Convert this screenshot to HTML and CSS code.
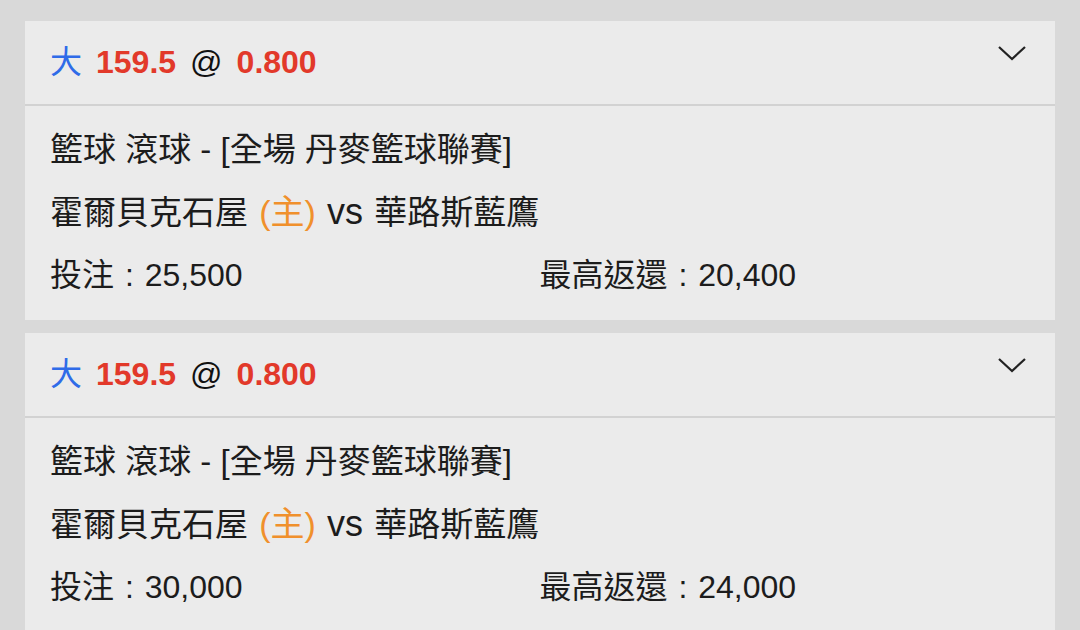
FILE: index.html
```html
<!DOCTYPE html>
<html lang="zh-Hant">
<head>
    <meta charset="UTF-8">
    <meta name="viewport" content="width=device-width, initial-scale=1.0">
    <title>投注記錄</title>
    <link rel="stylesheet" href="styles.css">
</head>
<body>
    <div class="bet-list">
        <div class="bet-card">
            <div class="bet-head">
                <div class="bet-title">
                    <span class="side">大</span>
                    <span class="num">159.5</span>
                    <span class="at">@</span>
                    <span class="num">0.800</span>
                </div>
                <svg class="chevron" width="30" height="16" viewBox="0 0 30 16">
                    <path d="M2 2 L15 14 L28 2" fill="none" stroke="#222" stroke-width="2.2"/>
                </svg>
            </div>
            <div class="bet-body">
                <div class="line">籃球 滾球 - [全場 丹麥籃球聯賽]</div>
                <div class="line match">霍爾貝克石屋 <span class="home">(主)</span> <span class="vs">vs</span> 華路斯藍鷹</div>
                <div class="line amounts">
                    <span>投注 : 25,500</span>
                    <span>最高返還 : 20,400</span>
                </div>
            </div>
        </div>

        <div class="bet-card">
            <div class="bet-head">
                <div class="bet-title">
                    <span class="side">大</span>
                    <span class="num">159.5</span>
                    <span class="at">@</span>
                    <span class="num">0.800</span>
                </div>
                <svg class="chevron" width="30" height="16" viewBox="0 0 30 16">
                    <path d="M2 2 L15 14 L28 2" fill="none" stroke="#222" stroke-width="2.2"/>
                </svg>
            </div>
            <div class="bet-body">
                <div class="line">籃球 滾球 - [全場 丹麥籃球聯賽]</div>
                <div class="line match">霍爾貝克石屋 <span class="home">(主)</span> <span class="vs">vs</span> 華路斯藍鷹</div>
                <div class="line amounts">
                    <span>投注 : 30,000</span>
                    <span>最高返還 : 24,000</span>
                </div>
            </div>
        </div>
    </div>
</body>
</html>
```

FILE: styles.css
```css
body {
    margin: 0;
    padding: 21px 25px 0;
    background-color: #d9d9d9;
    font-family: "Liberation Sans", "Noto Sans CJK TC", sans-serif;
    color: #1c1c1c;
}

.bet-list {
    display: flex;
    flex-direction: column;
    gap: 13px;
}

.bet-card {
    background-color: #ebebeb;
}

.bet-head {
    height: 83px;
    display: flex;
    align-items: center;
    justify-content: space-between;
    padding: 0 28px 0 25px;
    border-bottom: 2px solid #d2d2d2;
}

.bet-title {
    font-size: 32px;
    display: flex;
    gap: 14px;
    align-items: baseline;
    margin-top: -7px;
}

.side {
    color: #2f6be8;
}

.num {
    color: #e2392a;
    font-weight: bold;
}

.at {
    color: #111;
}

.chevron {
    align-self: flex-start;
    margin-top: 24px;
}

.bet-body {
    padding: 12px 26px 13px 25px;
}

.line {
    font-size: 33px;
    line-height: 63px;
    height: 63px;
    white-space: nowrap;
}

.match {
    word-spacing: 2px;
}

.home {
    color: #f0902c;
    font-size: 34px;
    line-height: 1;
}

.vs {
    font-size: 36px;
    line-height: 1;
}

.amounts {
    display: grid;
    grid-template-columns: 1fr 1fr;
    font-size: 32px;
    word-spacing: 2px;
}
```
